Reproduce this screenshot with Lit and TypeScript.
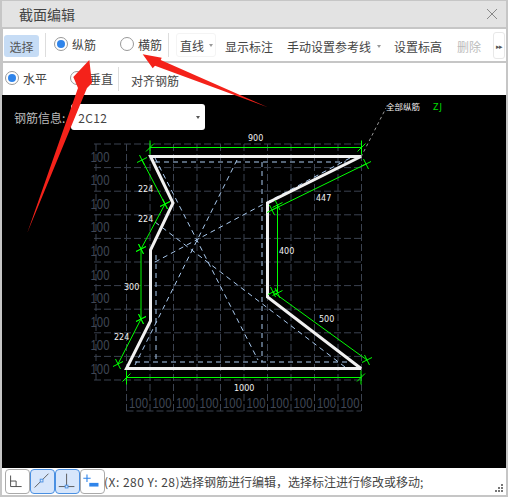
import { LitElement, html, css, svg } from "lit";
import { customElement } from "lit/decorators.js";

const GX = Array.from({ length: 11 }, (_, i) => 126.5 + 23.5 * i);
const GY = Array.from({ length: 11 }, (_, i) => 144 + 23.6 * i);

const star = (x: number, y: number) => svg`
  <path class="g" d="M${x - 5} ${y + 2.5}L${x + 5} ${y - 2.5}M${x - 2.5} ${y - 5}L${x + 2.5} ${y + 5}"/>`;

const dim = (x1: number, y1: number, x2: number, y2: number) => svg`
  <line class="g" x1=${x1} y1=${y1} x2=${x2} y2=${y2}/>${star(x1, y1)}${star(x2, y2)}`;

const tick = (x: number, y: number) => svg`
  <path class="g" d="M${x} ${y - 7}V${y + 7}M${x - 4} ${y + 4}L${x + 4} ${y - 4}"/>`;

@customElement("app-root")
export class AppRoot extends LitElement {
  static styles = css`
    :host {
      display: block;
      width: 508px;
      height: 497px;
      box-sizing: border-box;
      position: relative;
      overflow: hidden;
      background: #c6c6c6;
      padding: 1px 2px 2px 2px;
      font-family: "Noto Sans CJK SC", "Noto Sans", sans-serif;
      font-size: 12px;
      color: #444;
    }
    .win { display: flex; flex-direction: column; height: 100%; }
    .title {
      height: 26px; flex: none; background: #e3e3e3; display: flex; align-items: center;
      justify-content: space-between; padding: 0 8px 0 17px; font-size: 14px; color: #444;
      margin-bottom: 2px;
    }
    .close { width: 12px; height: 12px; display: block; }
    .bar {
      height: 32px; flex: none; background: #fff; display: flex; align-items: center;
      margin-left: 1px; white-space: nowrap;
    }
    .bar + .bar { margin-top: 2px; }
    .btn-sel {
      width: 35px; height: 22px; margin-left: 1px; margin-top: 2px; border-radius: 3px; background: #c6dcf5;
      color: #555; display: flex; align-items: center; justify-content: center;
    }
    .sep { width: 1px; height: 24px; background: #ddd; flex: none; }
    .radio { display: flex; align-items: center; gap: 4px; margin-top: -2px; }
    .dot {
      width: 14px; height: 14px; border-radius: 50%; border: 1px solid #999; box-sizing: border-box;
      background: #fff; display: flex; align-items: center; justify-content: center; flex: none;
    }
    .dot.on::after { content: ""; width: 8px; height: 8px; border-radius: 50%; background: #2f84ea; }
    .caret {
      width: 0; height: 0; border-left: 2.5px solid transparent; border-right: 2.5px solid transparent;
      border-top: 3px solid #999; flex: none;
    }
    .sel { display: flex; align-items: center; }
    .low { margin-top: 2px; }
    .dis { color: #bbb; }
    .more {
      width: 10px; height: 25px; border: 1px solid #e8e8e8; border-radius: 3px; font-size: 7px;
      display: flex; align-items: center; justify-content: center; color: #555; letter-spacing: -1px;
      margin-left: 12px; margin-top: 1px;
    }
    .s1 { margin-left: 6px; }
    .r1 { margin-left: 8px; }
    .r2 { margin-left: 24px; }
    .s2 { margin-left: 6px; }
    .line { margin-left: 7px; gap: 5px; width: 40px; height: 24px; padding-left: 3px; box-sizing: border-box; border: 1px solid #f4f4f4; border-radius: 3px; }
    .show { margin-left: 9px; }
    .manual { margin-left: 14px; gap: 6px; }
    .elev { margin-left: 13px; }
    .del { margin-left: 15px; }
    .h { margin-left: 2px; }
    .v { margin-left: 23px; gap: 5px; }
    .s3 { margin-left: 5px; }
    .align { margin-left: 12px; }
    .canvas { flex: 1; background: #000; position: relative; min-height: 0; overflow: hidden; }
    .canvas svg { display: block; }
    .info {
      position: absolute; left: 12px; top: 9px; display: flex; align-items: center; color: #bcbcbc;
      font-size: 12px;
    }
    .select {
      width: 134px; height: 26px; margin-left: 6px; background: #fff; border-radius: 3px; box-sizing: border-box;
      display: flex; align-items: center; justify-content: space-between; padding: 0 5px 0 7px; color: #444;
      font-size: 12px; letter-spacing: 0.3px;
    }
    .select .caret { border-top-color: #555; }
    .g { stroke: #00ff00; stroke-width: 1; fill: none; }
    .grid { stroke: #3b4250; stroke-width: 1; stroke-dasharray: 7 3; fill: none; }
    .dash { stroke: #a9c9ee; stroke-width: 1; stroke-dasharray: 5 4; fill: none; }
    .lead { stroke: #999; stroke-width: 1; stroke-dasharray: 3 3; fill: none; }
    .shape { stroke: #f1f1f1; stroke-width: 3; fill: none; stroke-linejoin: miter; stroke-miterlimit: 2; }
    .gt { fill: #3f4654; font: 14px "Liberation Sans", sans-serif; }
    .lb { fill: #f2f2f2; font: 8px "DejaVu Sans", sans-serif; }
    .cn { fill: #eee; font: 8.5px "Noto Sans CJK SC", sans-serif; }
    .zj { fill: #00e000; font: 8px "DejaVu Sans", sans-serif; letter-spacing: 1px; }
    .status {
      height: 27px; flex: none; background: #fff; display: flex; align-items: center; padding-left: 3px;
      position: relative; white-space: nowrap;
    }
    .tools { display: flex; }
    .tool {
      width: 25px; height: 25px; box-sizing: border-box; border: 1px solid #aaa; border-radius: 4px;
      background: #fff; display: block;
    }
    .tool.on { background: #d7e6fb; border-color: #4a90e2; }
    .msg { font-size: 12px; color: #444; margin-left: -1px; }
    .coord { letter-spacing: 0.5px; }
    .grip { position: absolute; right: 2px; bottom: 2px; width: 9px; height: 9px; display: block; }
    .arrows { position: absolute; left: 0; top: 0; pointer-events: none; }
  `;

  render() {
    return html`
      <div class="win">
        <div class="title">
          <span>截面编辑</span>
          <svg class="close" viewBox="0 0 12 12"><path d="M1 1L11 11M11 1L1 11" stroke="#888" stroke-width="1" fill="none"/></svg>
        </div>
        <div class="bar">
          <div class="btn-sel">选择</div>
          <div class="sep s1"></div>
          <div class="radio r1"><span class="dot on"></span>纵筋</div>
          <div class="radio r2"><span class="dot"></span>横筋</div>
          <div class="sep s2"></div>
          <div class="sel line">直线<span class="caret"></span></div>
          <span class="show low">显示标注</span>
          <div class="sel manual low">手动设置参考线<span class="caret"></span></div>
          <span class="elev low">设置标高</span>
          <span class="dis del low">删除</span>
          <div class="more">▸▸</div>
        </div>
        <div class="bar">
          <div class="radio h"><span class="dot on"></span>水平</div>
          <div class="radio v"><span class="dot"></span>垂直</div>
          <div class="sep s3"></div>
          <span class="align low">对齐钢筋</span>
        </div>
        <div class="canvas">
          ${this.drawing()}
          <div class="info">钢筋信息:<div class="select">2C12<span class="caret"></span></div></div>
        </div>
        <div class="status">
          <div class="tools">
            <svg class="tool" viewBox="0 0 25 25"><path d="M5 6V18H17M5 12H11V18" stroke="#444" fill="none"/></svg>
            <svg class="tool on" viewBox="0 0 25 25"><path d="M4 19L19 4" stroke="#555" fill="none"/><rect x="10" y="10" width="3" height="3" fill="#d7e6fb" stroke="#4a90e2"/></svg>
            <svg class="tool on" viewBox="0 0 25 25"><path d="M11.5 4V18M3 18H20" stroke="#555" fill="none"/><rect x="10" y="16.500" width="3" height="3" fill="#d7e6fb" stroke="#4a90e2"/></svg>
            <svg class="tool" viewBox="0 0 25 25"><path d="M6.500 5V13M2.500 9H10.500" stroke="#2f84ea" stroke-width="1.200" fill="none"/><rect x="9" y="14" width="10" height="4" fill="#2f84ea"/></svg>
          </div>
          <span class="msg"><span class="coord">(X: 280 Y: 28)</span>选择钢筋进行编辑\uFF0C选择标注进行修改或移动;</span>
          <svg class="grip" viewBox="0 0 9 9" fill="#777"><rect x="6" y="0" width="2" height="2"/><rect x="3" y="3" width="2" height="2"/><rect x="6" y="3" width="2" height="2"/><rect x="0" y="6" width="2" height="2"/><rect x="3" y="6" width="2" height="2"/><rect x="6" y="6" width="2" height="2"/></svg>
        </div>
      </div>
      <svg class="arrows" width="508" height="497" viewBox="0 0 508 497">
        <path fill="#f4221a" d="M27.300 232.700L78 88L73.300 77L89.300 60L92 83L87 88Z"/>
        <path fill="#f4221a" d="M142.700 54.300L161.700 57.700L160.700 60L267.700 107.300L155 65.700L152.700 68.300Z"/>
      </svg>
    `;
  }

  drawing() {
    const L = 126.5, R = 361;
    return svg`
    <svg width="504" height="373" viewBox="2 95 504 373">
      ${GY.map(y => svg`<line class="grid" x1="94" y1=${y} x2=${R} y2=${y}/>`)}
      ${GX.map(x => svg`<line class="grid" x1=${x} y1="144" x2=${x} y2="412"/>`)}
      <line class="grid" x1="96" y1="144" x2="96" y2="380"/>
      <line class="grid" x1=${L} y1="411" x2=${R} y2="411"/>
      ${GY.slice(0, 10).map(y => svg`<text class="gt" x="90.500" y=${y + 17.5} textLength="19" lengthAdjust="spacingAndGlyphs">100</text>`)}
      ${GX.slice(0, 10).map(x => svg`<text class="gt" x=${x + 2.5} y="408" textLength="19" lengthAdjust="spacingAndGlyphs">100</text>`)}

      <path class="dash" d="M155 162H346M135 362H352M262 162V362M156 255V362"/>
      <path class="dash" d="M350 158L155 262M155 158L258 360M237 160L135 365M155 222L345 367"/>

      <path class="shape" d="M150.500 156.500H361L267.500 203V297L361 368.500H126.500L150.500 321V250L173 203Z"/>

      <line class="lead" x1="361" y1="157" x2="386" y2="108"/>

      <line class="g" x1="150" y1="147.500" x2="361.500" y2="147.500"/>
      ${tick(150, 147.5)}${tick(361.5, 147.5)}
      <line class="g" x1="126.500" y1="377.500" x2="361" y2="377.500"/>
      ${tick(126.5, 377.5)}${tick(361, 377.5)}
      ${dim(142, 160, 165, 204)}
      ${dim(165, 204, 141, 249)}
      ${dim(141, 249, 141, 319)}
      ${dim(141, 319, 118, 364)}
      ${dim(272, 210, 366, 164)}
      ${dim(277.500, 205, 277.500, 293)}
      ${dim(273, 292, 367, 360)}

      <text class="lb" x="248" y="141">900</text>
      <text class="lb" x="138" y="192">224</text>
      <text class="lb" x="138" y="222">224</text>
      <text class="lb" x="124" y="290">300</text>
      <text class="lb" x="114" y="340">224</text>
      <text class="lb" x="316" y="201">447</text>
      <text class="lb" x="279" y="254">400</text>
      <text class="lb" x="319" y="322">500</text>
      <text class="lb" x="234" y="391">1000</text>
      <text class="cn" x="386" y="110">全部纵筋</text>
      <text class="zj" x="433" y="110">ZJ</text>
    </svg>`;
  }
}
